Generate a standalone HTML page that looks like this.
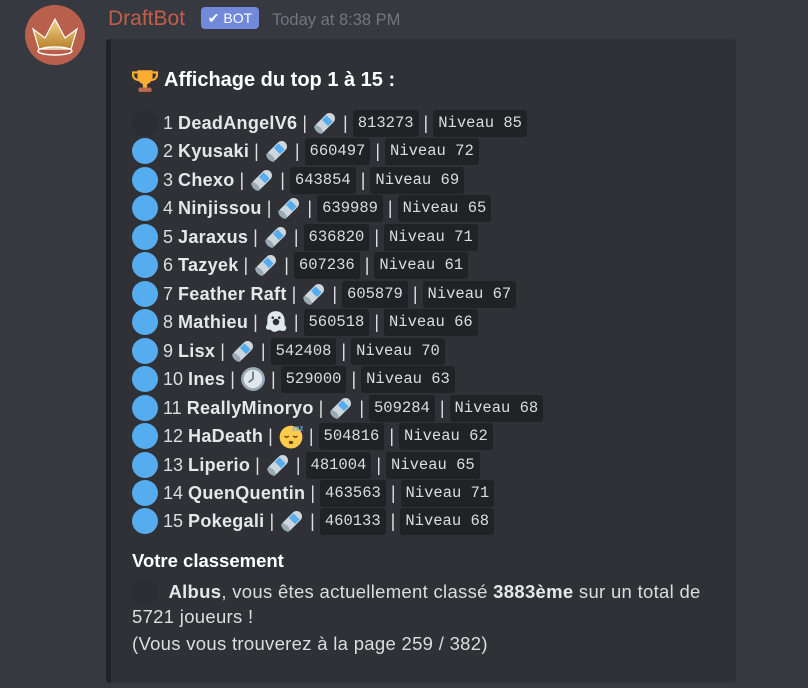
<!DOCTYPE html>
<html><head><meta charset="utf-8"><style>
body{margin:0;width:808px;height:688px;background:#36393f;overflow:hidden;font-family:"Liberation Sans",sans-serif;color:#dcddde;position:relative}
.av{position:absolute;left:25px;top:5px;width:60px;height:60px;border-radius:50%;background:#b8604b}
.name{position:absolute;left:108px;top:7px;font-size:21px;color:#c45e4a}
.bot{position:absolute;left:201px;top:7px;width:58px;height:22px;background:#7289da;border-radius:4px;color:#fff;font-size:14px;line-height:22px;text-align:center}
.ts{position:absolute;left:272px;top:11px;font-size:16.5px;color:#72767d}
.emb{position:absolute;left:106px;top:39px;width:630px;height:644px;background:#2f3136;border-left:5px solid #202225;border-radius:4px;box-sizing:border-box}
.title{position:absolute;left:132px;top:67px;font-size:20px;font-weight:bold;color:#fff;display:flex;align-items:center;gap:6px}
.row{position:absolute;left:132px;height:28px;display:flex;align-items:center;font-size:18px;white-space:nowrap}
.c{width:26px;height:26px;border-radius:50%;background:#55acee;margin-right:5px;flex:none}
.c.d{background:#2a2d32}
b{color:#e6e7e8;letter-spacing:0.3px}
.p{margin:0 5px;color:#dcddde}
code{font-family:"Liberation Mono",monospace;font-size:15.5px;background:#202225;border-radius:3px;padding:0 5px;height:27px;line-height:27px;letter-spacing:0;display:inline-block}
.e{width:26px;height:26px;flex:none}
.txt{position:absolute;left:132px;font-size:18.5px;letter-spacing:0.3px}
</style></head><body>
<div class="av"><svg width="60" height="60" viewBox="0 0 60 60"><defs><linearGradient id="g" x1="0" y1="0" x2="0" y2="1"><stop offset="0" stop-color="#f4d38a"/><stop offset="1" stop-color="#b7812a"/></linearGradient></defs><path d="M8 24 L20 33 L30 14 L40 33 L52 24 L46 44 L14 44 Z" fill="url(#g)" stroke="#fff" stroke-width="1.2"/><ellipse cx="30" cy="46" rx="17" ry="4" fill="none" stroke="#fff" stroke-width="1.5"/></svg></div>
<div class="name">DraftBot</div>
<div class="bot">✔ BOT</div>
<div class="ts">Today at 8:38 PM</div>
<div class="emb"></div>
<div class="title"><svg width="26" height="26" viewBox="0 0 24 24"><path d="M5 3h14v6a7 7 0 0 1-14 0z" fill="#ffac33"/><path d="M5 5H1v3a5 5 0 0 0 5 4M19 5h4v3a5 5 0 0 1-5 4" fill="none" stroke="#ffac33" stroke-width="2"/><rect x="10" y="15" width="4" height="4" fill="#ffac33"/><rect x="6" y="19" width="12" height="4" rx="1" fill="#c1694f"/></svg>Affichage du top 1 à 15 :</div>
<svg width="0" height="0" style="position:absolute"><defs><symbol id="s" viewBox="0 0 24 24"><g transform="rotate(-45 12 12)"><rect x="1" y="7" width="22" height="10" rx="5" fill="#ccd6dd"/><rect x="12" y="8" width="6" height="8" fill="#55acee"/><ellipse cx="3.5" cy="12" rx="2.5" ry="5" fill="#99aab5"/></g></symbol></defs></svg>
<div class="row" style="top:109px"><span class="c d"></span>1&nbsp;<b>DeadAngelV6</b><span class="p">|</span><svg class="e"><use href="#s"/></svg><span class="p">|</span><code>813273</code><span class="p">|</span><code>Niveau 85</code></div>
<div class="row" style="top:137px"><span class="c"></span>2&nbsp;<b>Kyusaki</b><span class="p">|</span><svg class="e"><use href="#s"/></svg><span class="p">|</span><code>660497</code><span class="p">|</span><code>Niveau 72</code></div>
<div class="row" style="top:166px"><span class="c"></span>3&nbsp;<b>Chexo</b><span class="p">|</span><svg class="e"><use href="#s"/></svg><span class="p">|</span><code>643854</code><span class="p">|</span><code>Niveau 69</code></div>
<div class="row" style="top:194px"><span class="c"></span>4&nbsp;<b>Ninjissou</b><span class="p">|</span><svg class="e"><use href="#s"/></svg><span class="p">|</span><code>639989</code><span class="p">|</span><code>Niveau 65</code></div>
<div class="row" style="top:223px"><span class="c"></span>5&nbsp;<b>Jaraxus</b><span class="p">|</span><svg class="e"><use href="#s"/></svg><span class="p">|</span><code>636820</code><span class="p">|</span><code>Niveau 71</code></div>
<div class="row" style="top:251px"><span class="c"></span>6&nbsp;<b>Tazyek</b><span class="p">|</span><svg class="e"><use href="#s"/></svg><span class="p">|</span><code>607236</code><span class="p">|</span><code>Niveau 61</code></div>
<div class="row" style="top:280px"><span class="c"></span>7&nbsp;<b>Feather Raft</b><span class="p">|</span><svg class="e"><use href="#s"/></svg><span class="p">|</span><code>605879</code><span class="p">|</span><code>Niveau 67</code></div>
<div class="row" style="top:308px"><span class="c"></span>8&nbsp;<b>Mathieu</b><span class="p">|</span><svg class="e" viewBox="0 0 24 24"><path d="M12 2c5 0 8 4 8 9v4c2 1 2 4 0 5-2 1-4-1-6 0s-4 2-6 0-4 0-5-2 1-3 1-5v-3c0-5 3-8 8-8z" fill="#e1e8ed"/><circle cx="12" cy="12" r="3" fill="#292f33"/><circle cx="9" cy="8" r="1.2" fill="#292f33"/><circle cx="15" cy="8" r="1.2" fill="#292f33"/></svg><span class="p">|</span><code>560518</code><span class="p">|</span><code>Niveau 66</code></div>
<div class="row" style="top:337px"><span class="c"></span>9&nbsp;<b>Lisx</b><span class="p">|</span><svg class="e"><use href="#s"/></svg><span class="p">|</span><code>542408</code><span class="p">|</span><code>Niveau 70</code></div>
<div class="row" style="top:365px"><span class="c"></span>10&nbsp;<b>Ines</b><span class="p">|</span><svg class="e" viewBox="0 0 24 24"><circle cx="12" cy="12" r="11" fill="#99aab5"/><circle cx="12" cy="12" r="8.5" fill="#e1e8ed"/><path d="M12 5v7l-4 3" stroke="#66757f" stroke-width="1.6" fill="none"/></svg><span class="p">|</span><code>529000</code><span class="p">|</span><code>Niveau 63</code></div>
<div class="row" style="top:394px"><span class="c"></span>11&nbsp;<b>ReallyMinoryo</b><span class="p">|</span><svg class="e"><use href="#s"/></svg><span class="p">|</span><code>509284</code><span class="p">|</span><code>Niveau 68</code></div>
<div class="row" style="top:422px"><span class="c"></span>12&nbsp;<b>HaDeath</b><span class="p">|</span><svg class="e" viewBox="0 0 24 24"><circle cx="12" cy="13" r="10.5" fill="#ffcc4d"/><path d="M6 12q2 2 4 0M14 12q2 2 4 0" stroke="#664500" stroke-width="1.3" fill="none"/><ellipse cx="12" cy="18" rx="2" ry="1.5" fill="#664500"/><text x="13" y="7" font-size="7" font-weight="bold" fill="#5dadec" font-family="Liberation Sans">zzz</text></svg><span class="p">|</span><code>504816</code><span class="p">|</span><code>Niveau 62</code></div>
<div class="row" style="top:451px"><span class="c"></span>13&nbsp;<b>Liperio</b><span class="p">|</span><svg class="e"><use href="#s"/></svg><span class="p">|</span><code>481004</code><span class="p">|</span><code>Niveau 65</code></div>
<div class="row" style="top:479px"><span class="c"></span>14&nbsp;<b>QuenQuentin</b><span class="p">|</span><code>463563</code><span class="p">|</span><code>Niveau 71</code></div>
<div class="row" style="top:507px"><span class="c"></span>15&nbsp;<b>Pokegali</b><span class="p">|</span><svg class="e"><use href="#s"/></svg><span class="p">|</span><code>460133</code><span class="p">|</span><code>Niveau 68</code></div>
<div class="txt" style="top:550px;font-weight:bold;color:#fff;letter-spacing:0">Votre classement</div>
<div class="txt" style="top:579px;display:flex;align-items:center"><span class="c d"></span>&nbsp;<b>Albus</b>, vous êtes actuellement classé&nbsp;<b>3883ème</b>&nbsp;sur un total de</div>
<div class="txt" style="top:606px">5721 joueurs !</div>
<div class="txt" style="top:633px">(Vous vous trouverez à la page 259 / 382)</div>
</body></html>
